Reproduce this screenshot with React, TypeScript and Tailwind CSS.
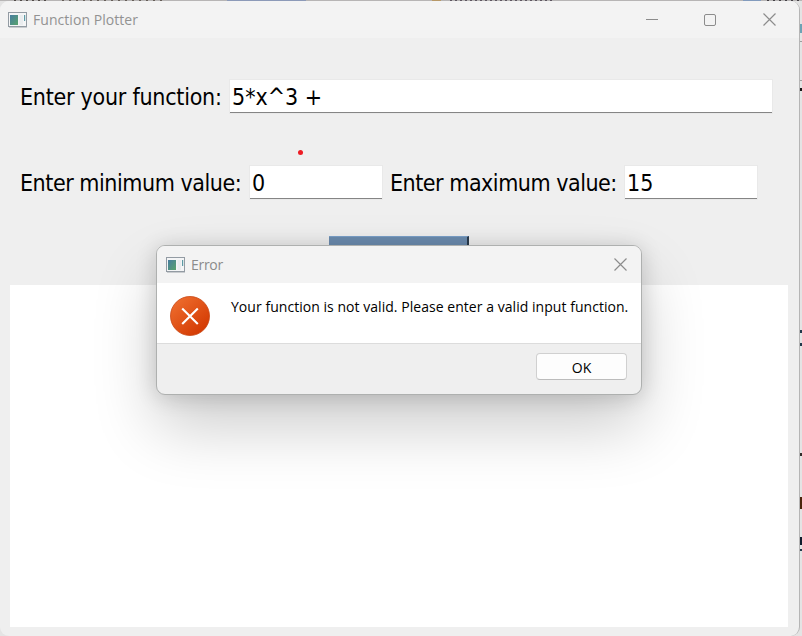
import React from "react";

const AppIcon = () => (
  <svg width="19" height="16" viewBox="0 0 19 16" className="shrink-0">
    <defs>
      <linearGradient id="screen" x1="0" y1="0" x2="1" y2="1">
        <stop offset="0" stopColor="#477da0" />
        <stop offset="1" stopColor="#58a36c" />
      </linearGradient>
    </defs>
    <rect x="0.5" y="0.5" width="18" height="14" fill="#f4f5f6" stroke="#939ba3" />
    <path d="M1 15.5H19" stroke="#c9cccf" />
    <rect x="2" y="3" width="8" height="10" fill="url(#screen)" />
    <rect x="11.5" y="3" width="3.5" height="10" fill="#e9ecee" />
    <rect x="16" y="3" width="1.2" height="6" fill="#5d9aa5" />
  </svg>
);

const CloseIcon = () => (
  <svg width="13" height="13" viewBox="0 0 13 13" fill="none" stroke="#8c8c8c" strokeWidth="1.15">
    <path d="M0.5 0.5L12.5 12.5M12.5 0.5L0.5 12.5" />
  </svg>
);

const ErrorIcon = () => (
  <svg width="40" height="40" viewBox="0 0 40 40" className="shrink-0">
    <defs>
      <linearGradient id="error" x1="0.15" y1="0.1" x2="0.85" y2="0.9">
        <stop offset="0" stopColor="#ed6b2c" />
        <stop offset="1" stopColor="#d33902" />
      </linearGradient>
    </defs>
    <circle cx="20" cy="20" r="19.5" fill="url(#error)" stroke="#c94613" strokeWidth="0.8" />
    <path d="M12.2 12.5L27.8 28.1M27.8 12.5L12.2 28.1" stroke="#fff" strokeWidth="2.1" />
  </svg>
);

const Label = ({ text, className }: { text: string; className: string }) => (
  <span className={`shrink-0 whitespace-nowrap leading-[35px] ${className}`}>{text}</span>
);

const Field = ({ value, className }: { value: string; className: string }) => (
  <div
    className={`h-[33px] shrink-0 whitespace-pre border-b border-b-[#858585] bg-white pl-[2px] leading-[35px] shadow-[0_0_0_1px_#e9e9e9] ${className}`}
  >
    {value}
  </div>
);

const Dialog = () => (
  <div className="absolute left-[156px] top-[245px] flex h-[150px] w-[486px] flex-col overflow-hidden rounded-[9px] border border-[#aeb0af] bg-[#efefef] font-['Open_Sans','Noto_Sans',sans-serif] shadow-[0_32px_64px_rgba(0,0,0,0.20),0_2px_21px_rgba(0,0,0,0.16)]">
    <div className="flex h-[37px] shrink-0 items-center bg-[#f3f3f3] pl-[9px] pr-[14px] text-[#8b8b8b]">
      <AppIcon />
      <span className="ml-[6px] flex-1 text-[14px] tracking-[-0.3px]">Error</span>
      <CloseIcon />
    </div>
    <div className="flex h-[60px] shrink-0 bg-white pl-[13px] pt-[13px]">
      <ErrorIcon />
      <span className="ml-[21px] whitespace-nowrap text-[14px] leading-[22px] tracking-[0.04px] text-black">
        Your function is not valid. Please enter a valid input function.
      </span>
    </div>
    <div className="flex flex-1 justify-end border-t border-[#dcdcdc] pr-[14px] pt-[9px]">
      <button className="h-[27px] w-[91px] rounded-[4px] border border-[#d0d0d0] border-b-[#bcbcbc] bg-[#fdfdfd] text-[14px] leading-[27px] text-black">
        OK
      </button>
    </div>
  </div>
);

export default function App() {
  return (
    <div className="relative h-[636px] w-[802px] overflow-hidden bg-[#e4e4e4] pt-px font-['DejaVu_Sans_Condensed','DejaVu_Sans',sans-serif] text-[23px] text-black">
      <div className="absolute left-0 top-0 flex h-px w-[802px] bg-[#b7b5b5]">
        <i className="ml-[14px] w-[34px] bg-[repeating-linear-gradient(90deg,#514b48_0_2px,#b7b5b5_2px_6px)]" />
        <i className="ml-[14px] w-[100px] bg-[repeating-linear-gradient(90deg,#665e58_0_2px,#b7b5b5_2px_7px)]" />
        <i className="ml-[65px] w-[79px] bg-[#8c9ab8]" />
        <i className="ml-[126px] w-[9px] bg-[#b79867]" />
        <i className="ml-[9px] w-[102px] bg-[repeating-linear-gradient(90deg,#5d5660_0_2px,#b7b5b5_2px_5px)]" />
        <i className="ml-[191px] w-[18px] bg-[#829bbd]" />
        <i className="ml-[6px] flex-1 bg-[repeating-linear-gradient(90deg,#454147_0_2px,#b7b5b5_2px_6px)]" />
      </div>
      <div className="absolute right-0 top-[9px] flex h-[627px] w-[2px] flex-col">
        <i className="mt-[15px] h-[9px] bg-[#6da3b5]" />
        <i className="mt-[8px] h-px bg-[#9d9d9d]" />
        <i className="mt-[38px] h-px bg-[#9d9d9d]" />
        <i className="mt-[7px] h-[3px] bg-[#171717]" />
        <i className="mt-[239px] h-[3px] bg-[#21394a]" />
        <i className="mt-[10px] h-[3px] bg-[#21394a]" />
        <i className="mt-[107px] h-[3px] bg-[#322d2b]" />
        <i className="mt-[41px] h-[12px] bg-[#4b250c]" />
        <i className="mt-[28px] h-[8px] bg-[#101e2e]" />
        <i className="mt-[4px] h-[2px] bg-[#21394a]" />
      </div>

      <div className="relative flex h-[635px] w-[800px] flex-col overflow-hidden rounded-[9px] border-r border-[#b5b5b5] bg-[#efefef]">
        <header className="flex h-[37px] shrink-0 items-center bg-[#f3f3f3] pl-[8px] font-['Open_Sans','Noto_Sans',sans-serif] text-[14px] text-[#929292]">
          <AppIcon />
          <span className="ml-[6px] flex-1 tracking-[0.05px]">Function Plotter</span>
          <i className="h-px w-[12px] bg-[#8c8c8c]" />
          <i className="ml-[46px] size-[12px] rounded-[2px] border border-[#8c8c8c]" />
          <span className="ml-[47px] mr-[23px]"><CloseIcon /></span>
        </header>
        <main className="flex flex-1 flex-col">
          <div className="mt-[42px] flex h-[33px] pl-[20px]">
            <Label text="Enter your function:" className="w-[210px] tracking-[-0.25px]" />
            <Field value="5*x^3 +" className="w-[542px]" />
          </div>
          <div className="flex h-[53px] items-end pb-[12px] pl-[298px]">
            <i className="mb-[-1px] size-[5px] rounded-full bg-[#ed1c24]" />
          </div>
          <div className="flex h-[33px] pl-[20px]">
            <Label text="Enter minimum value:" className="w-[230px] tracking-[-0.46px]" />
            <Field value="0" className="w-[132px]" />
            <Label text="Enter maximum value:" className="ml-[8px] w-[235px] tracking-[-0.48px]" />
            <Field value="15" className="w-[132px]" />
          </div>
          <div className="ml-[329px] mt-[37px] h-[39px] w-[140px] border-r-2 border-t border-r-[#2a3b4c] border-t-[#7aa0c9] bg-[#6c8caf]" />
          <div className="ml-[10px] mt-[10px] h-[342px] w-[778px] bg-white" />
        </main>
      </div>
      <Dialog />
    </div>
  );
}
